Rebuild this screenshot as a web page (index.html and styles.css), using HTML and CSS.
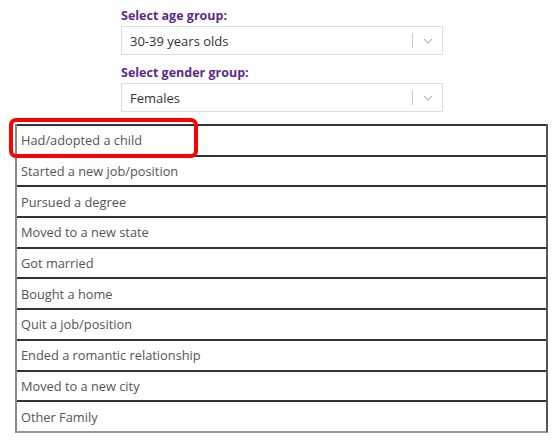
FILE: index.html
```html
<!DOCTYPE html>
<html>
<head>
<meta charset="utf-8">
<link rel="stylesheet" href="styles.css">
</head>
<body>
<div class="page">
  <div class="filters">
    <div class="field">
      <div class="label">Select age group:</div>
      <div class="select">
        <span class="value">30-39 years olds</span>
        <span class="sep"></span>
        <svg class="chev" width="10" height="6" viewBox="0 0 10 6"><path d="M1 1l4 4 4-4" fill="none" stroke="#bbb" stroke-width="1.2"/></svg>
      </div>
    </div>
    <div class="field">
      <div class="label">Select gender group:</div>
      <div class="select">
        <span class="value">Females</span>
        <span class="sep"></span>
        <svg class="chev" width="10" height="6" viewBox="0 0 10 6"><path d="M1 1l4 4 4-4" fill="none" stroke="#bbb" stroke-width="1.2"/></svg>
      </div>
    </div>
  </div>
  <div class="list-wrap">
    <ul class="list">
      <li>Had/adopted a child</li>
      <li>Started a new job/position</li>
      <li>Pursued a degree</li>
      <li>Moved to a new state</li>
      <li>Got married</li>
      <li>Bought a home</li>
      <li>Quit a job/position</li>
      <li>Ended a romantic relationship</li>
      <li>Moved to a new city</li>
      <li>Other Family</li>
    </ul>
    <div class="highlight"></div>
  </div>
</div>
</body>
</html>
```
FILE: styles.css
```css
html, body {
  margin: 0;
  padding: 0;
  background: #fff;
}
.page {
  width: 560px;
  height: 444px;
  font-family: "Open Sans", "Noto Sans", sans-serif;
  overflow: hidden;
}
.filters {
  padding: 7px 0 0 121px;
  display: flex;
  flex-direction: column;
  gap: 9px;
}
.field {
  display: flex;
  flex-direction: column;
  gap: 2px;
}
.label {
  color: #5b2a8c;
  font-weight: 700;
  font-size: 12.5px;
  line-height: 17px;
  height: 17px;
}
.select {
  box-sizing: border-box;
  width: 322px;
  height: 29px;
  border: 1px solid #ddd;
  display: flex;
  align-items: center;
  padding-left: 8px;
  padding-right: 9px;
  color: #333;
  font-size: 13px;
}
.value {
  flex: 1;
}
.sep {
  width: 1px;
  height: 15px;
  background: #ccc;
  margin-right: 10px;
}
.chev {
  display: block;
}
.list-wrap {
  position: relative;
  margin: 12px 0 0 15px;
  width: 533px;
}
.list {
  list-style: none;
  margin: 0;
  padding: 0;
  border-left: 2px solid #888;
  border-right: 2px solid #555;
  border-bottom: 2px solid #999;
}
.list li {
  box-sizing: border-box;
  height: 30.7px;
  border-top: 2px solid #333;
  padding-left: 4px;
  display: flex;
  align-items: center;
  color: #555;
  font-size: 12.8px;
}
.highlight {
  position: absolute;
  left: -6px;
  top: -6px;
  width: 189px;
  height: 40px;
  box-sizing: border-box;
  border: 4px solid #f00;
  border-radius: 7px;
}
```
